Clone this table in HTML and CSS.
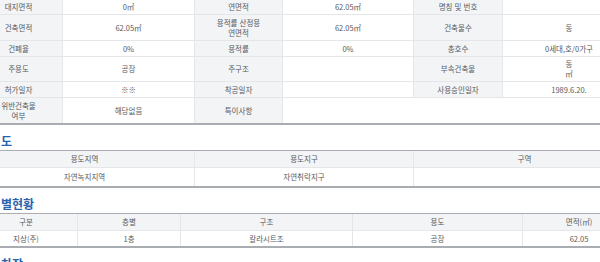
FILE: index.html
```html
<!DOCTYPE html>
<html lang="ko">
<head>
<meta charset="utf-8">
<link rel="stylesheet" href="styles.css">
</head>
<body>
<div class="page">
  <div class="grid info">
    <div class="c lab">대지면적</div><div class="c">0㎡</div>
    <div class="c lab">연면적</div><div class="c">62.05㎡</div>
    <div class="c lab">명칭 및 번호</div><div class="c end"></div>

    <div class="c lab">건축면적</div><div class="c">62.05㎡</div>
    <div class="c lab">용적률 산정용<br>연면적</div><div class="c">62.05㎡</div>
    <div class="c lab">건축물수</div><div class="c end">동</div>

    <div class="c lab">건폐율</div><div class="c">0%</div>
    <div class="c lab">용적률</div><div class="c">0%</div>
    <div class="c lab">총호수</div><div class="c end">0세대,호/0가구</div>

    <div class="c lab">주용도</div><div class="c">공장</div>
    <div class="c lab">주구조</div><div class="c"></div>
    <div class="c lab">부속건축물</div><div class="c end">동<br>㎡</div>

    <div class="c lab">허가일자</div><div class="c">※※</div>
    <div class="c lab">착공일자</div><div class="c"></div>
    <div class="c lab">사용승인일자</div><div class="c end">1989.6.20.</div>

    <div class="c lab last">위반건축물<br>여부</div><div class="c last">해당없음</div>
    <div class="c lab last">특이사항</div><div class="c last wide"></div>
  </div>

  <h2 class="sec">도</h2>
  <div class="grid zone">
    <div class="c hd">용도지역</div><div class="c hd">용도지구</div><div class="c hd end">구역</div>
    <div class="c last">자연녹지지역</div><div class="c last">자연취락지구</div><div class="c last end"></div>
  </div>

  <h2 class="sec">별현황</h2>
  <div class="grid floor">
    <div class="c hd">구분</div><div class="c hd">층별</div><div class="c hd">구조</div><div class="c hd">용도</div><div class="c hd end">면적(㎡)</div>
    <div class="c last">지상(주)</div><div class="c last">1층</div><div class="c last">칼라시트조</div><div class="c last">공장</div><div class="c last end">62.05</div>
  </div>

  <h2 class="sec tail">차장</h2>
</div>
</body>
</html>
```

FILE: styles.css
```css
html, body {
  margin: 0;
  padding: 0;
  background: #fff;
  overflow: hidden;
}

body {
  width: 600px;
  height: 262px;
  font-family: "Noto Sans CJK KR", "Noto Sans", sans-serif;
  font-size: 7.5px;
  color: #555a60;
}

.page {
  width: 660px;
  margin-left: -25px;
  margin-top: -1px;
}

.grid {
  display: grid;
  border-bottom: 2px solid #a9adb2;
}

.c {
  box-sizing: border-box;
  display: flex;
  align-items: center;
  justify-content: center;
  text-align: center;
  line-height: 10px;
  border-right: 1px solid #e4e6ea;
  border-bottom: 1px solid #e4e6ea;
  background: #fff;
}

.lab, .hd {
  background: #f3f4f6;
}

.c.last {
  border-bottom: none;
}

.c.end {
  border-right: none;
}

.c.wide {
  grid-column: span 3;
  border-right: none;
}

.info {
  grid-template-columns: 88px 132px 88px 131px 89px 132px;
  grid-template-rows: 16px 26px 16px 25px 16px 25px;
}

.sec {
  margin: 0;
  height: 25px;
  box-sizing: border-box;
  padding: 9px 0 0 26px;
  font-size: 12px;
  line-height: 14px;
  font-weight: 700;
  color: #2a62ad;
  font-family: "Noto Sans CJK KR", "Noto Sans", sans-serif;
}

.sec.tail {
  height: 20px;
}

.sec + .grid {
  border-top: 1px solid #a9adb2;
}

.zone {
  grid-template-columns: 220px 219px 221px;
  grid-template-rows: 17px 18px;
}

.floor {
  grid-template-columns: 103px 103px 172px 170px 112px;
  grid-template-rows: 17px 15px;
}
```
